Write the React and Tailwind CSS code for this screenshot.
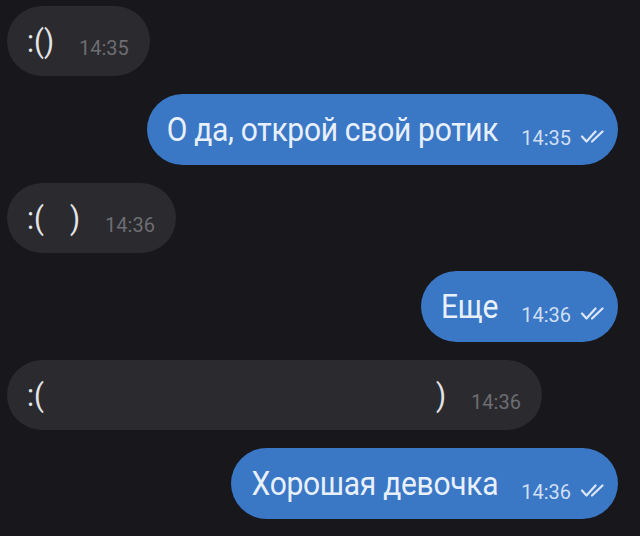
import React from 'react';

const messages = [
  { id: 1, out: false, parts: [':()'], time: '14:35' },
  { id: 2, out: true, text: 'О да, открой свой ротик', time: '14:35' },
  { id: 3, out: false, parts: [':(', 'w-[26px]', ')'], time: '14:36' },
  { id: 4, out: true, text: 'Еще', time: '14:36' },
  { id: 5, out: false, parts: [':(', 'w-[392px]', ')'], time: '14:36' },
  { id: 6, out: true, text: 'Хорошая девочка', time: '14:36' },
];

const DoubleCheck = () => (
  <svg width="25" height="13" viewBox="0 0 25 13" fill="none" className="shrink-0">
    <path d="M2 6.5 L6.5 11.5 L15.5 1.5" stroke="#dbe7f7" strokeWidth="2.2" strokeLinecap="round" strokeLinejoin="round" />
    <path d="M12 11.5 L22.5 1.5" stroke="#dbe7f7" strokeWidth="2.2" strokeLinecap="round" />
  </svg>
);

const Incoming = ({ msg }) => (
  <div className="flex justify-start">
    <div className="flex h-[70px] items-center rounded-full bg-[#2a2a2f] pl-5 pr-[21px]">
      <div className="flex scale-y-[1.1] items-center text-[29px] leading-none text-[#e4e4e6]">
        {msg.parts.map((p, i) =>
          p.startsWith('w-') ? (
            <span key={i} className={p === 'w-[26px]' ? 'inline-block w-[26px]' : 'inline-block w-[392px]'} />
          ) : (
            <span key={i}>{p}</span>
          )
        )}
      </div>
      <span className="ml-[25px] mt-[14px] text-[20px] leading-none text-[#6d6d72]">{msg.time}</span>
    </div>
  </div>
);

const Outgoing = ({ msg }) => (
  <div className="flex justify-end">
    <div className="flex h-[71px] items-center rounded-full bg-[#3a77c5] pl-5 pr-[13px]">
      <span className="inline-block scale-y-[1.13] text-[30px] leading-none tracking-[-0.3px] text-[#e8f0fb]">
        {msg.text}
      </span>
      <span className="ml-[23px] mt-[16px] text-[20px] leading-none text-[#cfdff4]">{msg.time}</span>
      <span className="ml-[9px] mt-[14px]">
        <DoubleCheck />
      </span>
    </div>
  </div>
);

export default function App() {
  return (
    <div
      className="flex h-[536px] w-[640px] flex-col gap-[18px] overflow-hidden bg-[#18171c] pl-[7px] pr-[22px] pt-[6px]"
      style={{ fontFamily: 'Roboto, "Noto Sans", sans-serif' }}
    >
      {messages.map((m) => (m.out ? <Outgoing key={m.id} msg={m} /> : <Incoming key={m.id} msg={m} />))}
    </div>
  );
}
